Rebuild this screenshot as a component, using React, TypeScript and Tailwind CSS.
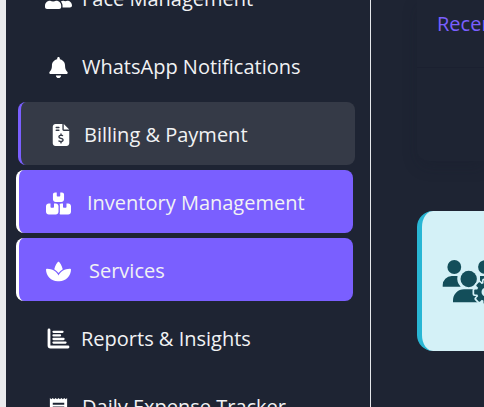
import type { ReactNode } from 'react';
import { FaBell, FaUserFriends } from 'react-icons/fa';
import { FaBoxesStacked, FaFileInvoiceDollar, FaSpa } from 'react-icons/fa6';
import { MdReceipt } from 'react-icons/md';

function ReportsIcon() {
  return (
    <svg width="24" height="24" viewBox="0 0 24 24" fill="none" stroke="currentColor" strokeLinecap="round" strokeLinejoin="round" aria-hidden="true">
      <path d="M3 3v15.5a1.5 1.5 0 0 0 1.5 1.5H22" strokeWidth="2.8" />
      <path d="M7.5 4.8h9M7.5 8.4h6.5M7.5 12h10M7.5 15.600h12" strokeWidth="2.3" />
    </svg>
  );
}

const gearTeeth = [0, 45, 90, 135, 180, 225, 270, 315];

function TeamIcon() {
  return (
    <svg width="62" height="48" viewBox="0 0 62 48" fill="#134e5a" aria-hidden="true" className="shrink-0">
      <circle cx="12.3" cy="10" r="6.9" />
      <circle cx="43" cy="10" r="6.9" />
      <path d="M.7 29.7V28a9 9 0 0 1 9-9h5.8a12 12 0 0 0 3.2 10.700z" />
      <path d="M54 29.7V28a9 9 0 0 0-9-9h-7v6z" />
      <circle cx="26.7" cy="22" r="8.2" />
      <path d="M11 45.300v-2a11 11 0 0 1 11-11h14v13z" />
      <g transform="translate(44 35)">
        <g fill="#d4f1f7">
          <circle r="10.500" />
          {gearTeeth.map((angle) => (
            <rect key={angle} x="-4" y="-13.500" width="8" height="8" rx="2" transform={`rotate(${angle})`} />
          ))}
        </g>
        <circle r="9" />
        {gearTeeth.map((angle) => (
          <rect key={angle} x="-2.500" y="-11.800" width="5" height="6" rx="1" transform={`rotate(${angle})`} />
        ))}
        <circle r="4.500" fill="#d4f1f7" />
      </g>
    </svg>
  );
}

type Tone = 'plain' | 'hover' | 'active';

const tones: Record<Tone, string> = {
  plain: 'ml-3 mr-4 border-transparent pl-6',
  hover: 'ml-3 mr-[15px] border-[#7a5fff] bg-[#353a47] pl-[29px]',
  active: 'ml-2.5 mr-[17px] border-white bg-[#7a5fff] pl-[27px]',
};

function NavItem({ icon, label, tone = 'plain', gap }: { icon: ReactNode; label: string; tone?: Tone; gap: string }) {
  return (
    <li>
      <a href="#" className={`flex h-[63px] items-center rounded-lg border-l-3 pt-[3px] text-white ${gap} ${tones[tone]}`}>
        {icon}
        <span className="whitespace-nowrap text-[#f1f2f4]">{label}</span>
      </a>
    </li>
  );
}

export default function App() {
  return (
    <div className="flex h-screen overflow-hidden bg-[#1e2433] pl-1.5 shadow-[inset_6px_0_0_#e9eaec] font-['Open_Sans','Noto_Sans',sans-serif]">
      <nav className="w-[365px] shrink-0 border-r border-[#e5e7eb] text-xl leading-7">
        <ul className="-mt-[34px] flex flex-col gap-[5px]">
          <NavItem icon={<FaUserFriends size={27} />} label="Face Management" gap="gap-2.5" />
          <NavItem icon={<FaBell size={21} className="mx-[3px]" />} label="WhatsApp Notifications" gap="gap-2.5" />
          <NavItem icon={<FaFileInvoiceDollar size={22} />} label="Billing & Payment" tone="hover" gap="gap-3" />
          <NavItem icon={<FaBoxesStacked size={25} />} label="Inventory Management" tone="active" gap="gap-4" />
          <NavItem icon={<FaSpa size={25} />} label="Services" tone="active" gap="gap-[18px]" />
          <NavItem icon={<span className="mx-px"><ReportsIcon /></span>} label="Reports & Insights" gap="gap-2.5" />
          <NavItem icon={<MdReceipt size={23} className="mx-0.5" />} label="Daily Expense Tracker" gap="gap-2.5" />
        </ul>
      </nav>
      <main className="min-w-0 flex-1 pl-[46px]">
        <section className="h-[161px] rounded-bl-xl shadow-[0_6px_16px_rgba(20,24,40,0.2)]">
          <h2 className="h-[68px] overflow-hidden border-b border-[#1b2030] pt-2.5 pl-5 text-xl leading-7 whitespace-nowrap text-[#7a5fff]">
            Recent
          </h2>
        </section>
        <section className="mt-[50px] flex h-[140px] items-center overflow-hidden rounded-l-2xl border-l-5 border-[#29b6d4] bg-[#d4f1f7] pl-5">
          <TeamIcon />
        </section>
      </main>
    </div>
  );
}
